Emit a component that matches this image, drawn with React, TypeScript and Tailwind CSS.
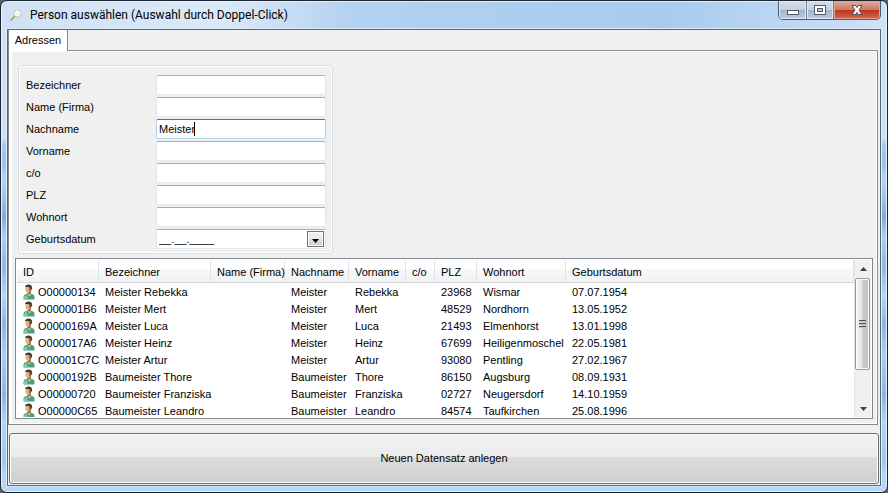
import type { ReactNode } from "react";

const fields = [
  { id: "bezeichner", label: "Bezeichner", value: "" },
  { id: "firma", label: "Name (Firma)", value: "" },
  { id: "nachname", label: "Nachname", value: "Meister" },
  { id: "vorname", label: "Vorname", value: "" },
  { id: "co", label: "c/o", value: "" },
  { id: "plz", label: "PLZ", value: "" },
  { id: "wohnort", label: "Wohnort", value: "" },
];

const columns = ["ID", "Bezeichner", "Name (Firma)", "Nachname", "Vorname", "c/o", "PLZ", "Wohnort", "Geburtsdatum"];

const rows = [
  ["O00000134", "Meister Rebekka", "", "Meister", "Rebekka", "", "23968", "Wismar", "07.07.1954"],
  ["O000001B6", "Meister Mert", "", "Meister", "Mert", "", "48529", "Nordhorn", "13.05.1952"],
  ["O0000169A", "Meister Luca", "", "Meister", "Luca", "", "21493", "Elmenhorst", "13.01.1998"],
  ["O000017A6", "Meister Heinz", "", "Meister", "Heinz", "", "67699", "Heiligenmoschel", "22.05.1981"],
  ["O00001C7C", "Meister Artur", "", "Meister", "Artur", "", "93080", "Pentling", "27.02.1967"],
  ["O0000192B", "Baumeister Thore", "", "Baumeister", "Thore", "", "86150", "Augsburg", "08.09.1931"],
  ["O00000720", "Baumeister Franziska", "", "Baumeister", "Franziska", "", "02727", "Neugersdorf", "14.10.1959"],
  ["O00000C65", "Baumeister Leandro", "", "Baumeister", "Leandro", "", "84574", "Taufkirchen", "25.08.1996"],
];

function PersonIcon() {
  return (
    <svg className="h-4 w-3 shrink-0" viewBox="0 0 12 16" aria-hidden="true">
      <path d="M0.500 15.500V12.500Q0.500 10.700 3 10L6 9L9 10Q11.500 10.700 11.500 12.500V15.500Z" fill="#4f9f7c" />
      <path d="M1 14Q1 11.500 3.500 10.500L5 15.500H1Z" fill="#86c8a8" />
      <path d="M4.500 9.500L6.500 12.500L8 9.500Z" fill="#eef2ea" />
      <path d="M4.500 7H7.800V9.500L6.500 11L4.500 9.500Z" fill="#9a6542" />
      <ellipse cx="5.200" cy="5" rx="2.800" ry="3.800" fill="#dcb08c" />
      <path d="M6 3H8.600Q8.800 6.500 7 8.600L6.200 6Z" fill="#8a5a3c" />
      <path d="M2 3Q2.500 0.400 5.500 0.400Q9.300 0.400 9.200 4.500L8.400 6.200L7.800 3.200Q5.500 2.800 2 3Z" fill="#3f3a38" />
    </svg>
  );
}

function CaptionButton({ label, className, children }: { label: string; className: string; children: ReactNode }) {
  return (
    <button type="button" aria-label={label} className={`flex h-full items-center justify-center ${className}`}>
      {children}
    </button>
  );
}

function TitleBar() {
  return (
    <header className="flex h-7 shrink-0 items-start justify-between pl-[3px]">
      <div className="flex h-7 items-center gap-2">
        <svg className="h-3 w-3" viewBox="0 0 12 12" aria-hidden="true">
          <path d="M1 11L5 7" stroke="#a99a3c" strokeWidth="1.500" strokeLinecap="round" />
          <circle cx="7.500" cy="4.500" r="3.700" fill="#f2f5f8" stroke="#c4bfb8" />
          <path d="M5.500 4Q6 2.500 7.500 2.300" stroke="#fff" fill="none" />
        </svg>
        <h1 className="font-[Roboto,'Open_Sans',sans-serif] text-xs leading-4">
          Person auswählen (Auswahl durch Doppel-Click)
        </h1>
      </div>
      <div className="flex h-[19px] overflow-hidden rounded-b-[5px] border border-t-0 border-[#4b5b70]">
        <CaptionButton
          label="Minimieren"
          className="w-7 border-r border-[#6d7f97] bg-[linear-gradient(to_bottom,#d3deeb,#c3d0e0_48%,#9fb3cb_48%,#bccde2)] shadow-[inset_0_0_0_1px_#dfe9f4]"
        >
          <svg className="h-3 w-3" viewBox="0 0 12 12" aria-hidden="true">
            <rect x="0.500" y="6.500" width="11" height="4" fill="#fff" stroke="#52586a" />
          </svg>
        </CaptionButton>
        <CaptionButton
          label="Maximieren"
          className="w-[27px] border-r border-[#6d7f97] bg-[linear-gradient(to_bottom,#d3deeb,#c3d0e0_48%,#9fb3cb_48%,#bccde2)] shadow-[inset_0_0_0_1px_#dfe9f4]"
        >
          <svg className="h-3 w-3" viewBox="0 0 12 12" aria-hidden="true">
            <rect x="0.500" y="1.500" width="11" height="9" fill="#fff" stroke="#52586a" />
            <rect x="3.500" y="4.500" width="5" height="3" fill="#b7c8dc" stroke="#52586a" />
          </svg>
        </CaptionButton>
        <CaptionButton
          label="Schließen"
          className="w-[46px] bg-[linear-gradient(to_bottom,#e3ab9d,#cf7765_48%,#b9321a_48%,#d4694f)] shadow-[inset_0_0_0_1px_#e3a494]"
        >
          <svg className="h-3 w-3" viewBox="0 0 12 12" aria-hidden="true">
            <path
              d="M1 1.500H4.500L6 3.500L7.500 1.500H11L8 6L11 10.500H7.500L6 8.500L4.500 10.500H1L4 6Z"
              fill="#fff"
              stroke="#52485a"
            />
          </svg>
        </CaptionButton>
      </div>
    </header>
  );
}

function SearchForm() {
  return (
    <form className="ml-[3px] flex w-[315px] shrink-0 flex-col gap-[2px] rounded-[3px] border border-[#d5dfe5] pb-1 pl-[7px] pr-[6px] pt-[9px] shadow-[inset_0_0_0_1px_#fff]">
      {fields.map((field) => (
        <div key={field.id} className="flex h-5 items-center">
          <label htmlFor={field.id} className="w-[130px]">
            {field.label}
          </label>
          <div
            className={`flex h-5 flex-1 items-center rounded-[2px] border bg-white px-[2px] ${
              field.value
                ? "border-x-[#b5cfe7] border-b-[#b7d9ed] border-t-[#3d7bad]"
                : "border-x-[#e2e3ea] border-b-[#e3e9ef] border-t-[#abadb3]"
            }`}
          >
            {field.value ? (
              <>
                <input id={field.id} defaultValue={field.value} className="field-sizing-content outline-none" />
                <span className="-ml-px h-[14px] w-px bg-black" />
              </>
            ) : (
              <input id={field.id} className="w-full outline-none" />
            )}
          </div>
        </div>
      ))}
      <div className="flex h-5 items-center">
        <label htmlFor="geburtsdatum" className="w-[130px]">
          Geburtsdatum
        </label>
        <div className="flex h-5 flex-1 items-center rounded-[2px] border border-x-[#e2e3ea] border-b-[#e3e9ef] border-t-[#abadb3] bg-white pl-[2px] pr-px">
          <input id="geburtsdatum" defaultValue="__.__.____" className="min-w-0 flex-1 outline-none" />
          <button
            type="button"
            aria-label="Datum wählen"
            className="flex h-4 w-[17px] items-center justify-center border border-[#707070] bg-[linear-gradient(to_bottom,#f2f2f2,#ebebeb_50%,#dddddd_50%,#cfcfcf)] shadow-[inset_0_0_0_1px_#fcfcfc]"
          >
            <svg className="mt-1 h-1 w-[7px]" viewBox="0 0 7 4" aria-hidden="true">
              <path d="M0 0H7L3.500 4Z" fill="#000" />
            </svg>
          </button>
        </div>
      </div>
    </form>
  );
}

function ScrollBar() {
  return (
    <div className="flex w-[17px] shrink-0 flex-col items-center border-l border-[#e3e3e3] bg-[#f0f0f0]">
      <button type="button" aria-label="Nach oben" className="flex h-[18px] w-full shrink-0 items-center justify-center">
        <svg className="h-1 w-[7px]" viewBox="0 0 7 4" aria-hidden="true">
          <path d="M3.500 0L7 4H0Z" fill="#404040" />
        </svg>
      </button>
      <div className="flex min-h-0 w-full flex-1 flex-col">
        <div className="flex h-3/4 w-[15px] flex-col items-center justify-center gap-px rounded-[2px] border border-[#979797] bg-[linear-gradient(to_right,#f4f4f4,#e4e4e6_48%,#cfcfd3_48%,#bdbdc2)] shadow-[inset_0_0_0_1px_#fafafa]">
          <span className="h-[2px] w-[7px] border-t border-[#505050] bg-[#c4c4c4]" />
          <span className="h-[2px] w-[7px] border-t border-[#505050] bg-[#c4c4c4]" />
          <span className="h-[2px] w-[7px] border-t border-[#505050] bg-[#c4c4c4]" />
        </div>
      </div>
      <button type="button" aria-label="Nach unten" className="flex h-[17px] w-full shrink-0 items-center justify-center">
        <svg className="h-1 w-[7px]" viewBox="0 0 7 4" aria-hidden="true">
          <path d="M0 0H7L3.500 4Z" fill="#404040" />
        </svg>
      </button>
    </div>
  );
}

function ResultList() {
  return (
    <div className="flex min-h-0 flex-1 border border-[#828790] bg-white p-px">
      <div className="min-w-0 flex-1 overflow-hidden">
        <table className="w-full table-fixed border-separate border-spacing-0 text-left">
          <colgroup>
            <col className="w-[82px]" />
            <col className="w-28" />
            <col className="w-[74px]" />
            <col className="w-16" />
            <col className="w-[57px]" />
            <col className="w-[29px]" />
            <col className="w-[42px]" />
            <col className="w-[89px]" />
            <col />
          </colgroup>
          <thead>
            <tr className="h-[23px]">
              {columns.map((name) => (
                <th
                  key={name}
                  className="whitespace-nowrap border-b border-r border-b-[#d5d5d5] border-r-[#e2e4e7] bg-[linear-gradient(to_bottom,#ffffff_40%,#f7f8fa_40%,#f1f2f4)] p-0 pl-[6px] pt-[2px] font-normal"
                >
                  {name}
                </th>
              ))}
            </tr>
          </thead>
          <tbody>
            {rows.map((row) => (
              <tr key={row[0]} className="h-[17px]">
                {row.map((cell, i) => (
                  <td key={i} className="whitespace-nowrap p-0 pl-[6px] pt-px">
                    {i === 0 ? (
                      <span className="flex h-4 items-center gap-[3px]">
                        <PersonIcon />
                        {cell}
                      </span>
                    ) : (
                      cell
                    )}
                  </td>
                ))}
              </tr>
            ))}
          </tbody>
        </table>
      </div>
      <ScrollBar />
    </div>
  );
}

export default function App() {
  return (
    <div className="h-screen bg-[#5b5f64] font-['Liberation_Sans',Arial,sans-serif] text-[11px] leading-[14px] text-black">
      <div className="flex h-full flex-col overflow-hidden rounded-[7px] border border-[#1c2430] bg-[linear-gradient(to_bottom,transparent_28%,#a9cdf5_29%,#9bbfe8_33%,#b4d4f7_36%,#a3c4ea_40%,#86abd6_44%,#abcff6_48%,#93b7e0_54%,#b4d6fa_60%,#8fb4de_66%,#aed1f8_72%,#8fb4de_80%,#b4d6fa_86%,#a0c5ee_93%,#b4d6fa_97%),linear-gradient(to_right,#cfe1f4,#dbe9f7_25%,#b3d1f0_40%,#a9cbed_75%,#bcd6f2_88%,#cfe2f6)] shadow-[inset_0_0_0_1px_#e6f1fb]">
        <div className="flex min-h-0 flex-1 flex-col px-[6px] pb-[6px]">
          <TitleBar />
          <main className="flex min-h-0 flex-1 flex-col border border-[#56687c] bg-[#f0f0f0] shadow-[0_0_0_1px_#d9ecfb]">
            <div role="tablist" className="flex h-5 shrink-0">
              <button
                type="button"
                role="tab"
                aria-selected="true"
                className="z-10 -mb-px w-[60px] border-x border-[#898c95] bg-white pb-px"
              >
                Adressen
              </button>
            </div>
            <section className="mr-[2px] flex min-h-0 flex-1 flex-col border border-[#898c95] bg-white p-px pl-[3px]">
              <div className="flex min-h-0 flex-1 flex-col gap-1 bg-[#f0f0f0] pb-1 pl-[3px] pr-[3px] pt-[13px]">
                <SearchForm />
                <ResultList />
              </div>
            </section>
            <button
              type="button"
              className="mx-px mb-px mt-2 h-[51px] shrink-0 rounded-[3px] border border-[#707070] bg-[linear-gradient(to_bottom,#f2f2f2,#ebebeb_47%,#dddddd_47%,#cfcfcf)] pb-px shadow-[inset_0_0_0_1px_#fcfcfc]"
            >
              Neuen Datensatz anlegen
            </button>
          </main>
        </div>
      </div>
    </div>
  );
}
